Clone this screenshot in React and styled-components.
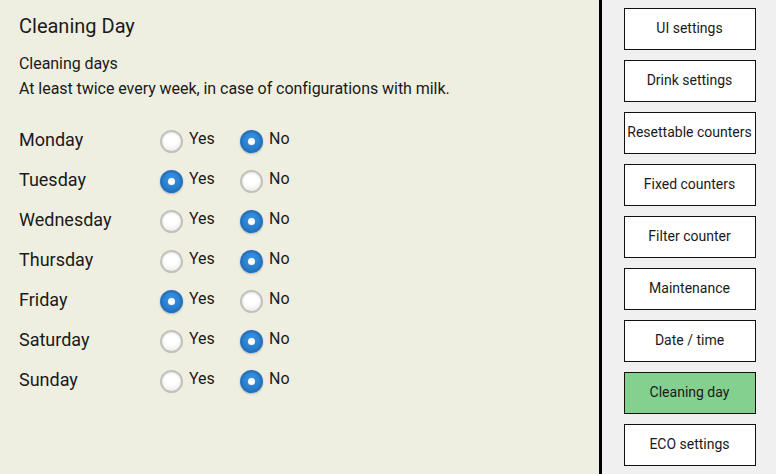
import React from 'react';
import styled, { createGlobalStyle } from 'styled-components';

const Global = createGlobalStyle`
  html, body { margin: 0; padding: 0; }
  body { font-family: Roboto, "Liberation Sans", sans-serif; color: #1a1a1a; }
`;

const Screen = styled.div`
  display: flex;
  width: 776px;
  height: 474px;
  overflow: hidden;
`;

const Main = styled.div`
  flex: 0 0 599px;
  background: #efefe1;
  padding: 13px 0 0 19px;
  box-sizing: border-box;
`;

const Divider = styled.div`
  flex: 0 0 3px;
  background: #000;
`;

const Side = styled.div`
  flex: 1;
  background: #f0f0f0;
  display: flex;
  flex-direction: column;
  align-items: center;
  padding: 8px 0 0 1px;
  gap: 10px;
`;

const Title = styled.div`
  font-size: 20px;
  line-height: 26px;
`;

const Note = styled.div`
  margin-top: 12px;
  font-size: 16px;
  line-height: 25px;
  letter-spacing: -0.05px;
`;

const Grid = styled.div`
  display: grid;
  grid-template-columns: 141px 80px 80px;
  grid-auto-rows: 40px;
  margin-top: 19px;
`;

const Day = styled.div`
  font-size: 18px;
  line-height: 40px;
`;

const Option = styled.label`
  display: flex;
  align-items: center;
  gap: 6px;
  font-size: 16px;
`;

const Dot = styled.span`
  width: 23px;
  height: 23px;
  border-radius: 50%;
  box-sizing: border-box;
  margin-top: 2px;
  display: flex;
  align-items: center;
  justify-content: center;
  border: 2px solid ${p => (p.$on ? '#2572bb' : '#c2c2ba')};
  box-shadow: ${p => (p.$on ? '0 1px 2px rgba(0,0,0,0.25)' : 'inset 0 1px 2px rgba(0,0,0,0.1)')};
  background: ${p =>
    p.$on
      ? 'radial-gradient(circle at 50% 40%, #3d97e4, #1d6dbd)'
      : 'radial-gradient(circle at 50% 35%, #ffffff 40%, #e4e4e4)'};
  &::after {
    content: '';
    display: ${p => (p.$on ? 'block' : 'none')};
    width: 7px;
    height: 7px;
    border-radius: 50%;
    background: #fff;
  }
`;

const Text = styled.span`
  margin-top: -4px;
`;

const NavButton = styled.div`
  width: 132px;
  height: 42px;
  box-sizing: border-box;
  border: 1px solid #111;
  background: ${p => (p.$active ? '#84d08e' : '#fff')};
  display: flex;
  align-items: center;
  justify-content: center;
  padding-bottom: 2px;
  font-size: 14px;
  white-space: nowrap;
`;

const days = [
  ['Monday', false],
  ['Tuesday', true],
  ['Wednesday', false],
  ['Thursday', false],
  ['Friday', true],
  ['Saturday', false],
  ['Sunday', false],
];

const nav = [
  'UI settings',
  'Drink settings',
  'Resettable counters',
  'Fixed counters',
  'Filter counter',
  'Maintenance',
  'Date / time',
  'Cleaning day',
  'ECO settings',
];

export default function App() {
  return (
    <Screen>
      <Global />
      <Main>
        <Title>Cleaning Day</Title>
        <Note>
          Cleaning days
          <br />
          At least twice every week, in case of configurations with milk.
        </Note>
        <Grid>
          {days.map(([name, yes]) => (
            <React.Fragment key={name}>
              <Day>{name}</Day>
              <Option>
                <Dot $on={yes} />
                <Text>Yes</Text>
              </Option>
              <Option>
                <Dot $on={!yes} />
                <Text>No</Text>
              </Option>
            </React.Fragment>
          ))}
        </Grid>
      </Main>
      <Divider />
      <Side>
        {nav.map(n => (
          <NavButton key={n} $active={n === 'Cleaning day'}>
            {n}
          </NavButton>
        ))}
      </Side>
    </Screen>
  );
}
